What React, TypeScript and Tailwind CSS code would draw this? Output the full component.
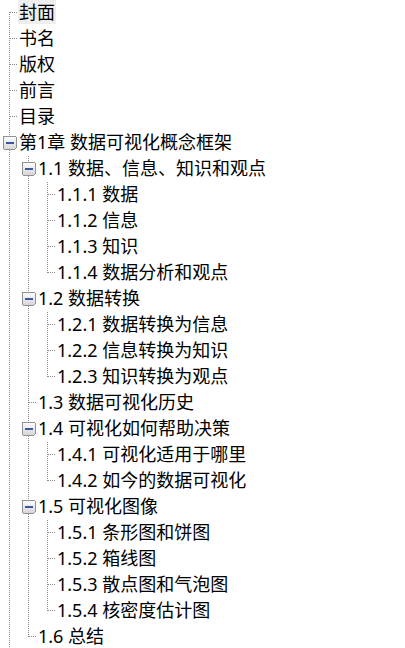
import React from 'react';

type Node = { t: string; c?: Node[] };

const toc: Node[] = [
  { t: '封面' },
  { t: '书名' },
  { t: '版权' },
  { t: '前言' },
  { t: '目录' },
  {
    t: '第1章 数据可视化概念框架',
    c: [
      {
        t: '1.1 数据、信息、知识和观点',
        c: [{ t: '1.1.1 数据' }, { t: '1.1.2 信息' }, { t: '1.1.3 知识' }, { t: '1.1.4 数据分析和观点' }],
      },
      {
        t: '1.2 数据转换',
        c: [{ t: '1.2.1 数据转换为信息' }, { t: '1.2.2 信息转换为知识' }, { t: '1.2.3 知识转换为观点' }],
      },
      { t: '1.3 数据可视化历史' },
      {
        t: '1.4 可视化如何帮助决策',
        c: [{ t: '1.4.1 可视化适用于哪里' }, { t: '1.4.2 如今的数据可视化' }],
      },
      {
        t: '1.5 可视化图像',
        c: [{ t: '1.5.1 条形图和饼图' }, { t: '1.5.2 箱线图' }, { t: '1.5.3 散点图和气泡图' }, { t: '1.5.4 核密度估计图' }],
      },
      { t: '1.6 总结' },
    ],
  },
];

type Row = { t: string; level: number; cont: boolean[]; last: boolean; first: boolean; open: boolean };

function flatten(nodes: Node[], level: number, cont: boolean[], out: Row[]) {
  nodes.forEach((n, i) => {
    const last = i === nodes.length - 1 && level > 0;
    out.push({ t: n.t, level, cont, last, first: level === 0 && i === 0, open: !!n.c });
    if (n.c) flatten(n.c, level + 1, [...cont, !last], out);
  });
  return out;
}

const rows = flatten(toc, 0, [], []);
const DOT = '#8a8a8a';

function Guide({ full }: { full: boolean }) {
  return (
    <svg width="19" height="26" className="shrink-0" shapeRendering="crispEdges">
      {full && <line x1="9.5" y1="0" x2="9.5" y2="26" stroke={DOT} strokeDasharray="1 1" />}
    </svg>
  );
}

function Branch({ row }: { row: Row }) {
  const top = row.first ? 12 : 0;
  const bottom = row.last ? 13 : 26;
  return (
    <svg width="19" height="26" className="shrink-0" shapeRendering="crispEdges">
      <defs>
        <linearGradient id="exp" x1="0" y1="0" x2="0" y2="1">
          <stop offset="0" stopColor="#ffffff" />
          <stop offset="1" stopColor="#d6d6d6" />
        </linearGradient>
      </defs>
      <line x1="9.5" y1={top} x2="9.5" y2={bottom} stroke={DOT} strokeDasharray="1 1" />
      <line x1="10" y1="12.5" x2="18" y2="12.5" stroke={DOT} strokeDasharray="1 1" />
      {row.open && (
        <g>
          <rect x="3" y="6" width="13" height="13" rx="1" fill="url(#exp)" stroke="#929292" />
          <rect x="6" y="12" width="8" height="1.6" fill="#3a58a0" />
        </g>
      )}
    </svg>
  );
}

export default function App() {
  return (
    <div
      className="h-screen overflow-hidden bg-white text-black"
      style={{ fontFamily: '"Noto Sans", "Noto Sans CJK SC", sans-serif' }}
    >
      {rows.map((row, i) => (
        <div key={i} className="flex h-[26px]">
          {row.cont.map((c, k) => (
            <Guide key={k} full={c} />
          ))}
          <Branch row={row} />
          <div
            className={`flex h-[24px] items-center whitespace-nowrap px-[1px] -ml-[1px] text-[18px] leading-none ${
              i === 0 ? 'bg-[#eeeeee]' : ''
            }`}
          >
            {row.t}
          </div>
        </div>
      ))}
    </div>
  );
}
